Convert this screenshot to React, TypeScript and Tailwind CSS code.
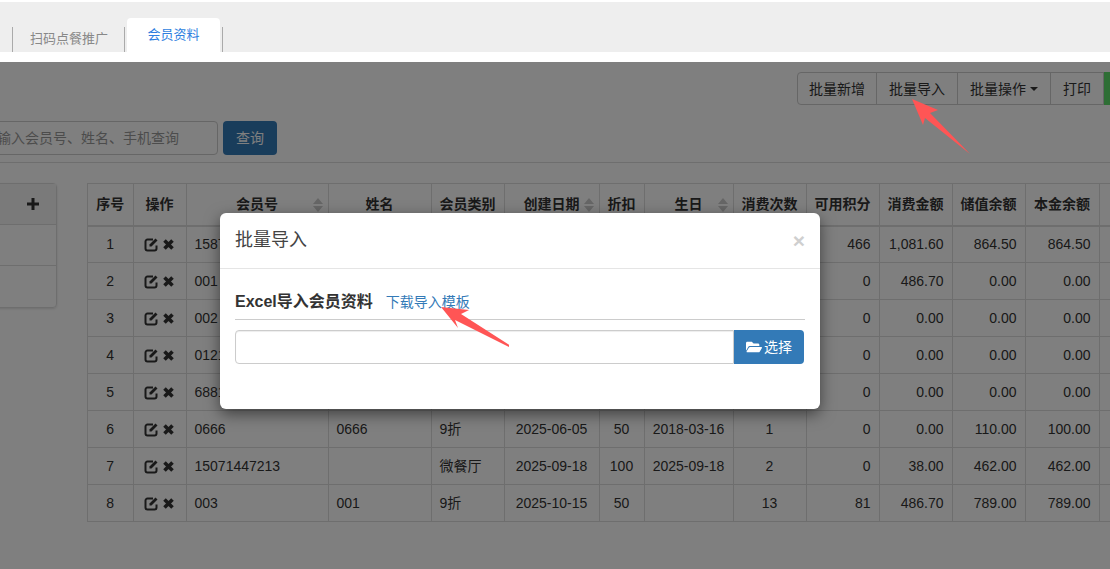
import { FaFolderOpen } from "react-icons/fa";

const columns = [
  { label: "序号", width: "w-[45px]" },
  { label: "操作", width: "w-[53px]" },
  { label: "会员号", width: "w-[142px]", sort: true },
  { label: "姓名", width: "w-[103px]" },
  { label: "会员类别", width: "w-[73px]" },
  { label: "创建日期", width: "w-[95px]", sort: true },
  { label: "折扣", width: "w-[45px]" },
  { label: "生日", width: "w-[89px]", sort: true },
  { label: "消费次数", width: "w-[73px]" },
  { label: "可用积分", width: "w-[73px]" },
  { label: "消费金额", width: "w-[73px]" },
  { label: "储值余额", width: "w-[73px]" },
  { label: "本金余额", width: "w-[74px]" },
  { label: "", width: "w-[80px]" },
];

const rows = [
  ["1", "15871447213", "", "9折", "2025-03-20", "50", "2018-03-16", "9", "466", "1,081.60", "864.50", "864.50", "1"],
  ["2", "001", "", "9折", "2025-05-12", "50", "", "3", "0", "486.70", "0.00", "0.00", ""],
  ["3", "002", "", "9折", "2025-05-12", "50", "", "0", "0", "0.00", "0.00", "0.00", ""],
  ["4", "0121", "", "9折", "2025-05-20", "50", "", "0", "0", "0.00", "0.00", "0.00", ""],
  ["5", "6881", "", "9折", "2025-05-28", "50", "", "0", "0", "0.00", "0.00", "0.00", "1"],
  ["6", "0666", "0666", "9折", "2025-06-05", "50", "2018-03-16", "1", "0", "0.00", "110.00", "100.00", "1"],
  ["7", "15071447213", "", "微餐厅", "2025-09-18", "100", "2025-09-18", "2", "0", "38.00", "462.00", "462.00", "1"],
  ["8", "003", "001", "9折", "2025-10-15", "50", "", "13", "81", "486.70", "789.00", "789.00", ""],
];

const EditIcon = () => (
  <svg width="15" height="15" viewBox="0 0 15 15" className="shrink-0">
    <path d="M9 2.5H3.5A2 2 0 0 0 1.5 4.500V11.500A2 2 0 0 0 3.500 13.500H10.500A2 2 0 0 0 12.500 11.500V8.500" fill="none" stroke="#333" strokeWidth="2" />
    <path d="M5.500 7.500L11.500 1.500L13.500 3.500L7.500 9.500H5.500Z" fill="#333" />
  </svg>
);

const RemoveIcon = () => (
  <svg width="13" height="13" viewBox="0 0 13 13" className="shrink-0">
    <path d="M2.500 2.500L10.500 10.500M10.500 2.500L2.500 10.500" fill="none" stroke="#333" strokeWidth="3.600" />
  </svg>
);

const SortCarets = () => (
  <span className="absolute right-[5px] top-[14px] flex flex-col gap-[2px]">
    <span className="h-0 w-0 border-x-[5px] border-b-[6px] border-x-transparent border-b-[#ccc]" />
    <span className="h-0 w-0 border-x-[5px] border-t-[6px] border-x-transparent border-t-[#ccc]" />
  </span>
);

const Tabs = () => (
  <div className="flex h-[50px] items-end bg-[#eee] pl-3 text-[13px]">
    <div className="flex h-[25px] w-[113px] items-center justify-center border-x border-[#aaa] pl-[1px] pb-[2px] text-[#888]">
      扫码点餐推广
    </div>
    <div className="ml-[2px] flex h-[34px] w-[93px] items-center justify-center rounded-t-[4px] bg-white text-[#2f7fe0]">
      会员资料
    </div>
    <div className="ml-[2px] h-[25px] border-l border-[#aaa]" />
  </div>
);

const Toolbar = () => (
  <div className="flex h-[101px] flex-col border-b border-[#ddd] pt-[10px] text-sm text-[#333]">
    <div className="-mr-[46px] flex h-[33px] shrink-0 justify-end">
      <div className="flex w-[80px] items-center justify-center rounded-l-[4px] border border-[#ccc]">批量新增</div>
      <div className="-ml-px flex w-[82px] items-center justify-center border border-[#ccc]">批量导入</div>
      <div className="-ml-px flex w-[94px] items-center justify-center gap-[4px] border border-[#ccc]">
        批量操作
        <span className="h-0 w-0 border-x-4 border-t-4 border-x-transparent border-t-[#333]" />
      </div>
      <div className="-ml-px flex w-[54px] items-center justify-center border border-[#ccc]">打印</div>
      <div className="w-[52px] bg-[#5cdc6a]" />
    </div>
    <div className="mt-[16px] flex h-[34px] gap-[5px]">
      <div className="-ml-[30px] flex w-[248px] items-center rounded-[4px] border border-[#ccc] pl-[12px] text-[#999]">
        请输入会员号、姓名、手机查询
      </div>
      <div className="flex w-[54px] items-center justify-center rounded-[4px] bg-[#337ab7] text-white">查询</div>
    </div>
  </div>
);

const SidePanel = () => (
  <div className="-ml-[20px] mt-[20px] h-[125px] w-[77px] shrink-0 rounded-[4px] border border-[#ddd] shadow-sm">
    <div className="flex h-[41px] items-center justify-end border-b border-[#ddd] bg-[#f5f5f5] pr-[16px]">
      <svg width="14" height="14" viewBox="0 0 14 14">
        <path d="M7 1V13M1 7H13" stroke="#333" strokeWidth="3" />
      </svg>
    </div>
    <div className="h-[41px] border-b border-[#ddd]" />
  </div>
);

const MemberTable = () => (
  <div className="ml-[30px] mt-[20px] min-w-0 flex-1 border-l border-[#ddd]">
    <table className="w-[1025px] table-fixed border-collapse text-sm text-[#333]">
      <thead>
        <tr className="h-[42px]">
          {columns.map((c) => (
            <th key={c.label} className={`relative border border-l-0 border-b-2 border-[#ddd] p-0 text-center font-bold ${c.width}`}>
              {c.label}
              {c.sort && <SortCarets />}
            </th>
          ))}
        </tr>
      </thead>
      <tbody>
        {rows.map((r) => (
          <tr key={r[0]} className="h-[37px]">
            <td className="border border-l-0 border-[#ddd] p-0 text-center">{r[0]}</td>
            <td className="border border-[#ddd] p-0">
              <div className="flex items-center justify-center gap-[3px]">
                <EditIcon />
                <RemoveIcon />
              </div>
            </td>
            {r.slice(1).map((v, i) => (
              <td
                key={i}
                className={`overflow-hidden border border-[#ddd] px-2 py-0 whitespace-nowrap ${i === 4 || i === 5 || i === 3 ? "text-center" : i >= 6 && i !== 6 ? "text-right" : i === 6 ? "text-center" : "text-left"}`}
              >
                {v}
              </td>
            ))}
            <td className="border border-[#ddd]" />
          </tr>
        ))}
      </tbody>
    </table>
  </div>
);

const ImportModal = () => (
  <div className="absolute left-[220px] top-[151px] h-[196px] w-[600px] rounded-[6px] bg-white text-[#333] shadow-[0_5px_15px_rgba(0,0,0,0.5)]">
    <div className="flex h-[56px] items-center justify-between border-b border-[#e5e5e5] pr-[15px] pl-[15px]">
      <span className="text-[18px] font-normal text-[#444]">批量导入</span>
      <span className="text-[21px] leading-none font-bold text-[#cfcfcf]">×</span>
    </div>
    <div className="px-[15px] pt-[20px]">
      <div className="flex h-[31px] items-start gap-[13px] border-b border-[#ccc]">
        <span className="text-base leading-[26px] font-bold">Excel导入会员资料</span>
        <span className="text-sm leading-[26px] text-[#337ab7]">下载导入模板</span>
      </div>
      <div className="mt-[10px] flex h-[34px] w-[569px]">
        <div className="flex-1 rounded-l-[4px] border border-[#ccc] shadow-[inset_0_1px_1px_rgba(0,0,0,0.075)]" />
        <div className="flex w-[70px] items-center justify-center gap-[2px] rounded-r-[4px] bg-[#337ab7] text-sm text-white">
          <FaFolderOpen size={16} />
          选择
        </div>
      </div>
    </div>
  </div>
);

const Arrow = ({ points, className }: { points: string; className: string }) => (
  <svg viewBox="0 0 70 64" width="70" height="64" className={className}>
    <polygon points={points} fill="#ff5555" />
  </svg>
);

export default function App() {
  return (
    <div className="relative flex h-[569px] w-[1110px] flex-col overflow-hidden bg-white font-['Liberation_Sans','Noto_Sans_CJK_SC',sans-serif]">
      <div className="h-[2px] shrink-0" />
      <Tabs />
      <div className="h-[10px] shrink-0" />
      <div className="relative min-h-0 flex-1">
        <Toolbar />
        <div className="flex">
          <SidePanel />
          <MemberTable />
        </div>
        <div className="absolute inset-0 bg-black/50" />
        <ImportModal />
        <Arrow className="absolute left-[910px] top-[36px]" points="2,1 28,12 20,15 60,56 15,20 13,27" />
        <Arrow className="absolute left-[439px] top-[243px]" points="2,2 30,5 22,9 86,50 16,15 19,23" />
      </div>
    </div>
  );
}
